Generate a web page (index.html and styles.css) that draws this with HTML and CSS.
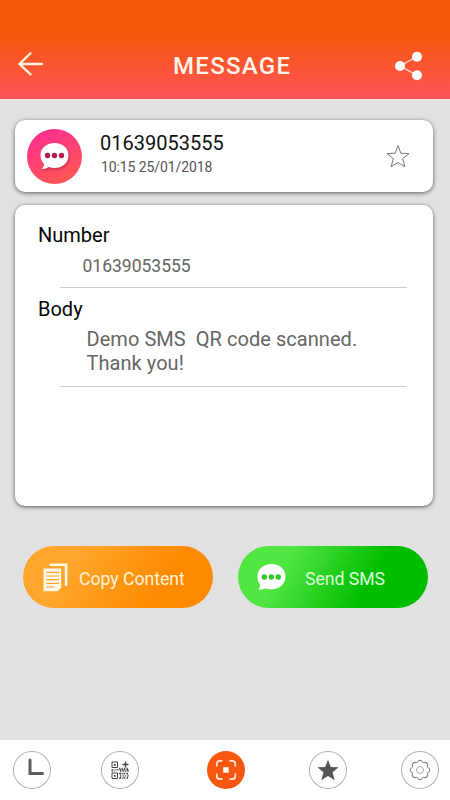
FILE: index.html
```html
<!DOCTYPE html>
<html lang="en">
<head>
<meta charset="utf-8">
<title>Message</title>
<link rel="stylesheet" href="styles.css">
</head>
<body>
<div class="app">
  <header class="header">
    <svg class="back" width="26" height="24" viewBox="0 0 26 24"><path d="M12.500 1.200 1.500 12l11 10.300M1.500 12H24"/></svg>
    <h1>MESSAGE</h1>
    <svg class="share" width="28" height="30" viewBox="0 0 28 30"><path d="M22 5.500 5 15l17 9.300"/><circle cx="22" cy="5.700" r="5"/><circle cx="5" cy="15" r="5"/><circle cx="22" cy="24.300" r="5"/></svg>
  </header>
  <main>
    <section class="card contact">
      <div class="avatar">
        <svg width="29" height="28" viewBox="0 0 29 28"><path fill="#fff" d="M14.500 1C6.500 1 .5 6 .5 13c0 4 1.400 7 3.500 9 0 2-.8 3.800-2.200 4.900 3.200.1 5.200-.7 6.700-2 1.900.7 3.900 1.100 6 1.100 8 0 14-5.300 14-12.600S22.500 1 14.500 1Z"/><g fill="#b51d4c"><circle cx="7.500" cy="13.500" r="2.700"/><circle cx="14.500" cy="13.500" r="2.700"/><circle cx="21.500" cy="13.500" r="2.700"/></g></svg>
      </div>
      <div class="who"><div class="phone">01639053555</div><div class="time">10:15 25/01/2018</div></div>
      <svg class="favorite" width="24" height="24" viewBox="0 0 24 24"><path d="m12 1.600 2.900 7.600 8.100.4-6.300 5.100 2.100 7.900-6.800-4.100-6.800 4.100 2.100-7.900L1 9.600l8.100-.4Z"/></svg>
    </section>
    <section class="card details">
      <h2>Number</h2>
      <div class="field number">01639053555</div>
      <h2 class="body-label">Body</h2>
      <div class="field message">Demo SMS&nbsp; QR code scanned.<br>Thank you!</div>
    </section>
    <div class="actions">
      <button class="copy">
        <svg width="25" height="29" viewBox="0 0 25 29"><path fill="none" stroke="#fff8e8" stroke-width="2.600" d="M6.500 1.800h16.600v21"/><path fill="#fff8e8" d="M.5 5.500h17.600v19l-3.300 3.700H.5Z"/><path stroke="#ffa52b" stroke-width="1.200" d="M3.200 9.300h13M3.200 13h13M3.200 16.700h13M3.200 20.400h13M3.200 24h8"/></svg>
        <span>Copy Content</span>
      </button>
      <button class="send">
        <svg width="29" height="28" viewBox="0 0 29 28"><path fill="#fff" d="M14.500 1C6.500 1 .5 6 .5 13.500c0 3.700 1 6 2.500 8 0 2-.3 3.800-1.700 4.900 3.200.5 5.200-.1 6.700-1.200 1.900.7 4.400 1.100 6.500 1.100 8 0 14-5.500 14-12.800S22.500 1 14.500 1Z"/><g fill="#31c929"><circle cx="7.300" cy="14" r="2.700"/><circle cx="14.300" cy="14" r="2.700"/><circle cx="21.300" cy="14" r="2.700"/></g></svg>
        <span>Send SMS</span>
      </button>
    </div>
  </main>
  <nav class="nav">
    <a class="tab"><svg width="38" height="38" viewBox="0 0 38 38"><path fill="none" stroke="#5c5c5c" stroke-width="3" stroke-linecap="round" d="M17 9v13.500h12.500"/></svg></a>
    <a class="tab codes"><svg width="38" height="38" viewBox="0 0 38 38"><g fill="none" stroke="#444" stroke-width="1"><path d="M11 11h5.500v5.500H11zM11 22h5.500v5.500H11z"/><path stroke-width="1.400" d="M24.500 10.500v6M21.500 13.500h6"/><path stroke-width="1.300" stroke-dasharray="2 1 1 1" d="M10.500 18.800h18"/><path stroke-width="1.300" stroke-dasharray="1.300 1.200" d="M10.500 20.200h3M18 17.500h10M19 20.200h9M18 22.500h10M19 24.800h9M18 27.200h10"/><path stroke-width="1" stroke-dasharray="1.800 2" d="M19.500 18v10M23 18v10M26.500 18v10"/></g><path fill="#444" d="M12.900 12.900h1.800v1.800h-1.800zM12.900 23.900h1.800v1.800h-1.800z"/></svg></a>
    <a class="tab scan active"><svg width="38" height="38" viewBox="0 0 38 38"><path fill="none" stroke="#ffe9dc" stroke-width="1.700" d="M9.800 15.500v-2.700a3 3 0 0 1 3-3h2.700M22.500 9.800h2.700a3 3 0 0 1 3 3v2.700M28.200 22.500v2.700a3 3 0 0 1-3 3h-2.700M15.500 28.200h-2.700a3 3 0 0 1-3-3v-2.700"/><path fill="#fff" d="M16.200 16.200h5.500v5.500h-5.500z"/></svg></a>
    <a class="tab saved"><svg width="38" height="38" viewBox="0 0 38 38"><path fill="#555" d="m19 8.800 2.800 7.100 7.800.4-6.100 4.900 2.200 8-6.700-4.300-6.700 4.300 2.200-8-6.100-4.900 7.800-.4Z"/></svg></a>
    <a class="tab settings"><svg width="38" height="38" viewBox="0 0 38 38"><defs><path id="tooth" d="M-3.100-7.500C-1.800-7.500-2.200-9.600-1.300-9.600H1.300C2.200-9.600 1.800-7.500 3.100-7.500"/></defs><g fill="none" stroke="#777" stroke-width="1" transform="translate(19 19)"><use href="#tooth"/><use href="#tooth" transform="rotate(45)"/><use href="#tooth" transform="rotate(90)"/><use href="#tooth" transform="rotate(135)"/><use href="#tooth" transform="rotate(180)"/><use href="#tooth" transform="rotate(225)"/><use href="#tooth" transform="rotate(270)"/><use href="#tooth" transform="rotate(315)"/><circle r="3.500" stroke="#aaa"/></g></svg></a>
  </nav>
</div>
</body>
</html>
```
FILE: styles.css
```css
* { box-sizing: border-box; }
body { margin: 0; font-family: Roboto, sans-serif; }
h1, h2 { margin: 0; }
svg { display: block; flex: none; }
.app { width: 450px; height: 800px; display: flex; flex-direction: column; background: #e1e1e1; overflow: hidden; }
.header {
  height: 100px; flex: none; padding: 34px 27px 0 18px;
  display: flex; align-items: center;
  background: linear-gradient(#f7570a 0, #f7570a 34px, #ff5356 95px, #ff5356 98px, #e94e48 99px, #f6dcd5 99px);
}
.header h1 { color: #fff4e8; font-size: 24px; line-height: 30px; font-weight: 500; letter-spacing: 1.300px; margin: 0 0 2px 129px; }
.back { fill: none; stroke: #fff0dc; stroke-width: 2.300; stroke-linecap: round; margin-bottom: 7px; }
.share { fill: #fff; stroke: none; margin: 0 0 2px auto; }
.share path { fill: none; stroke: #ffe5da; stroke-width: 1.300; }
main { flex: 1; padding: 20px 17px 0 15px; }
.card { background: #fff; border-radius: 10px; box-shadow: 0 1px 4px rgba(0,0,0,.6); }
.contact { height: 72px; display: flex; align-items: center; padding: 0 23px 0 12px; }
.avatar { width: 55px; height: 55px; border-radius: 50%; display: flex; align-items: center; justify-content: center; background: linear-gradient(155deg, #ff2f91 10%, #ff5555 85%); }
.avatar svg { filter: drop-shadow(1px 2px 1px rgba(130,0,40,.35)); }
.who { flex: 1; padding: 0 0 5px 18px; }
.phone { font-size: 20px; line-height: 24px; color: #111; }
.time { font-size: 14px; line-height: 18px; padding-left: 1px; margin-top: 3px; letter-spacing: -.1px; color: #555; }
.favorite { fill: none; stroke: #777; stroke-width: 1; }
.details { height: 301px; margin-top: 13px; padding: 18px 26px 0 23px; }
.details h2 { font-size: 20px; line-height: 24px; font-weight: 400; color: #050505; }
.field { margin-left: 22px; border-bottom: 1px solid #ccc; color: #666; }
.number { height: 41px; padding: 8px 0 0 22.500px; font-size: 17.500px; line-height: 22px; }
.details .body-label { margin-top: 9px; }
.message { height: 66px; padding: 6px 0 0 26.500px; font-size: 20px; line-height: 24px; letter-spacing: .05px; white-space: nowrap; }
.actions { display: flex; gap: 25px; margin: 40px -12px 0 8px; }
.actions button { width: 190px; height: 62px; border: 0; border-radius: 31px; display: flex; align-items: center; padding: 0 19px 0 20px; font: 17.700px/24px Roboto, sans-serif; white-space: nowrap; }
.actions .copy { color: #fff3d8; background: linear-gradient(120deg, #ffa62c 25%, #ff8a00 72%); gap: 11px; }
.actions .send { color: #dcffd8; background: linear-gradient(120deg, #52e643 25%, #00bd00 68%); gap: 19px; padding-left: 19px; }
.actions span { padding-top: 3px; }
.actions .copy span, .actions .send span { letter-spacing: -.05px; }
.nav { height: 60px; flex: none; background: #fff; display: flex; padding: 11px 0 0 13px; }
.tab { flex: none; width: 38px; height: 38px; border-radius: 50%; box-shadow: inset 0 0 0 1px #b0b0b0; }
.codes { margin-left: 50px; }
.scan { margin-left: 68px; }
.saved { margin-left: 64px; }
.settings { margin-left: 54px; }
.active { background: #f7570f; box-shadow: none; }
```
